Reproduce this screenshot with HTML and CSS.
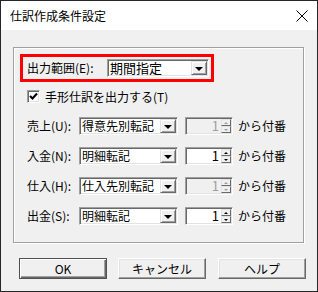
FILE: index.html
```html
<!DOCTYPE html>
<html lang="ja">
<head>
<meta charset="utf-8">
<link rel="stylesheet" href="styles.css">
</head>
<body>
<div class="window">
  <div class="titlebar">
    <span class="title">仕訳作成条件設定</span>
    <svg class="close" width="12" height="12" viewBox="0 0 12 12"><path d="M0.5 0.5 L11.5 11.5 M11.5 0.5 L0.5 11.5" stroke="#000" stroke-width="1" fill="none"/></svg>
  </div>
  <div class="content">
    <div class="group">
      <div class="redbox">
        <span class="lbl-range">出力範囲(E):</span>
        <div class="combo combo-range"><span class="val">期間指定</span><span class="dd"><i class="tri"></i></span></div>
      </div>
      <div class="checkrow">
        <span class="checkbox"><svg width="9" height="9" viewBox="0 0 9 9"><path d="M1 4 L3.5 6.5 L8 1.5" stroke="#000" stroke-width="2" fill="none"/></svg></span>
        <span class="cktext">手形仕訳を出力する(T)</span>
      </div>
      <div class="rows">
        <div class="row">
          <span class="lbl">売上(U):</span>
          <div class="combo"><span class="val">得意先別転記</span><span class="dd"><i class="tri"></i></span></div>
          <div class="spin disabled"><span class="num">1</span><span class="sb"><span class="up"><i class="tu"></i></span><span class="dn"><i class="td"></i></span></span></div>
          <span class="suffix">から付番</span>
        </div>
        <div class="row">
          <span class="lbl">入金(N):</span>
          <div class="combo"><span class="val">明細転記</span><span class="dd"><i class="tri"></i></span></div>
          <div class="spin"><span class="num">1</span><span class="sb"><span class="up"><i class="tu"></i></span><span class="dn"><i class="td"></i></span></span></div>
          <span class="suffix">から付番</span>
        </div>
        <div class="row">
          <span class="lbl">仕入(H):</span>
          <div class="combo"><span class="val">仕入先別転記</span><span class="dd"><i class="tri"></i></span></div>
          <div class="spin disabled"><span class="num">1</span><span class="sb"><span class="up"><i class="tu"></i></span><span class="dn"><i class="td"></i></span></span></div>
          <span class="suffix">から付番</span>
        </div>
        <div class="row">
          <span class="lbl">出金(S):</span>
          <div class="combo"><span class="val">明細転記</span><span class="dd"><i class="tri"></i></span></div>
          <div class="spin"><span class="num">1</span><span class="sb"><span class="up"><i class="tu"></i></span><span class="dn"><i class="td"></i></span></span></div>
          <span class="suffix">から付番</span>
        </div>
      </div>
    </div>
    <div class="buttons">
      <button class="btn default">OK</button>
      <button class="btn">キャンセル</button>
      <button class="btn help">ヘルプ</button>
    </div>
  </div>
</div>
</body>
</html>
```
FILE: styles.css
```css
html, body {
  margin: 0;
  padding: 0;
  background: #fff;
}
body {
  font-family: "Noto Sans CJK JP", "Noto Sans", sans-serif;
  font-size: 12px;
  color: #000;
}
.window {
  width: 318px;
  height: 292px;
  box-sizing: border-box;
  border: 1px solid #262626;
  background: #f0f0f0;
  display: flex;
  flex-direction: column;
}
.titlebar {
  height: 29px;
  background: #fff;
  display: flex;
  align-items: center;
  justify-content: space-between;
  padding: 0 8px 0 9px;
  flex-shrink: 0;
}
.title {
  font-size: 12px;
  line-height: 18px;
}
.close {
  display: block;
  margin-right: 1px;
}
.content {
  padding: 17px 0 0 12px;
}
.group {
  width: 291px;
  height: 196px;
  box-sizing: border-box;
  border: 1px solid #a0a0a0;
  box-shadow: inset 1px 1px 0 #fff, 1px 1px 0 #fff;
  padding: 6px 0 0 6px;
}
.redbox {
  width: 194px;
  height: 28px;
  box-sizing: border-box;
  border: 3px solid #ff0000;
  display: flex;
  align-items: center;
  padding-left: 4px;
}
.lbl-range {
  width: 80px;
  line-height: 18px;
}
.combo {
  height: 18px;
  box-sizing: border-box;
  background: #fff;
  border: 1px solid;
  border-color: #a0a0a0 #fff #fff #a0a0a0;
  box-shadow: inset 1px 1px 0 #696969, inset -1px -1px 0 #e3e3e3;
  display: flex;
  align-items: center;
  justify-content: space-between;
  padding: 0 1px 0 2px;
}
.combo-range {
  width: 102px;
}
.val {
  line-height: 16px;
  white-space: nowrap;
}
.combo-range .val {
  font-size: 13px;
}
.dd {
  width: 16px;
  height: 14px;
  box-sizing: border-box;
  background: #f0f0f0;
  border: 1px solid;
  border-color: #e3e3e3 #696969 #696969 #e3e3e3;
  box-shadow: inset 1px 1px 0 #fff, inset -1px -1px 0 #a0a0a0;
  display: flex;
  align-items: center;
  justify-content: center;
  flex-shrink: 0;
}
.tri {
  display: block;
  width: 0;
  height: 0;
  border-left: 4px solid transparent;
  border-right: 4px solid transparent;
  border-top: 4px solid #000;
  margin-top: 1px;
}
.checkrow {
  display: flex;
  align-items: center;
  margin: 8px 0 0 7px;
  height: 13px;
}
.cktext {
  line-height: 18px;
}
.checkbox {
  width: 13px;
  height: 13px;
  box-sizing: border-box;
  background: #fff;
  border: 1px solid;
  border-color: #a0a0a0 #fff #fff #a0a0a0;
  box-shadow: inset 1px 1px 0 #696969, inset -1px -1px 0 #e3e3e3;
  display: flex;
  align-items: center;
  justify-content: center;
  margin-right: 5px;
}
.checkbox svg {
  display: block;
}
.rows {
  display: flex;
  flex-direction: column;
  gap: 12px;
  margin-top: 14px;
}
.row {
  display: flex;
  align-items: center;
  height: 18px;
  padding-left: 7px;
}
.lbl {
  width: 52px;
  line-height: 18px;
}
.row .combo {
  width: 99px;
}
.spin {
  width: 48px;
  height: 18px;
  margin-left: 7px;
  box-sizing: border-box;
  background: #fff;
  border: 1px solid;
  border-color: #a0a0a0 #fff #fff #a0a0a0;
  box-shadow: inset 1px 1px 0 #696969, inset -1px -1px 0 #e3e3e3;
  display: flex;
  align-items: center;
  justify-content: flex-end;
  padding: 0 1px;
}
.spin.disabled {
  background: #f0f0f0;
  color: #a0a0a0;
}
.num {
  line-height: 16px;
  margin-right: 2px;
  font-size: 13px;
}
.sb {
  width: 10px;
  height: 14px;
  display: flex;
  flex-direction: column;
}
.up, .dn {
  height: 7px;
  box-sizing: border-box;
  background: #f0f0f0;
  border: 1px solid;
  border-color: #e3e3e3 #696969 #696969 #e3e3e3;
  display: flex;
  align-items: center;
  justify-content: center;
}
.tu, .td {
  display: block;
  width: 0;
  height: 0;
  border-left: 2px solid transparent;
  border-right: 2px solid transparent;
}
.tu { border-bottom: 2px solid #000; }
.td { border-top: 2px solid #000; }
.disabled .tu { border-bottom-color: #a0a0a0; }
.disabled .td { border-top-color: #a0a0a0; }
.suffix {
  margin-left: 5px;
  line-height: 18px;
}
.buttons {
  display: flex;
  gap: 11px;
  margin: 15px 0 0 6px;
}
.btn {
  width: 88px;
  height: 21px;
  box-sizing: border-box;
  font-family: "Noto Sans CJK JP", "Noto Sans", sans-serif;
  font-size: 12px;
  line-height: 16px;
  color: #000;
  background: #f0f0f0;
  border: 1px solid;
  border-color: #fff #696969 #696969 #fff;
  box-shadow: inset -1px -1px 0 #a0a0a0, inset 1px 1px 0 #e3e3e3;
  padding: 0;
}
.btn.default {
  border: 1px solid #505050;
  box-shadow: inset 1px 1px 0 #fff, inset -1px -1px 0 #696969, inset -2px -2px 0 #a0a0a0;
}
.btn.help {
  margin-left: 1px;
}
```
